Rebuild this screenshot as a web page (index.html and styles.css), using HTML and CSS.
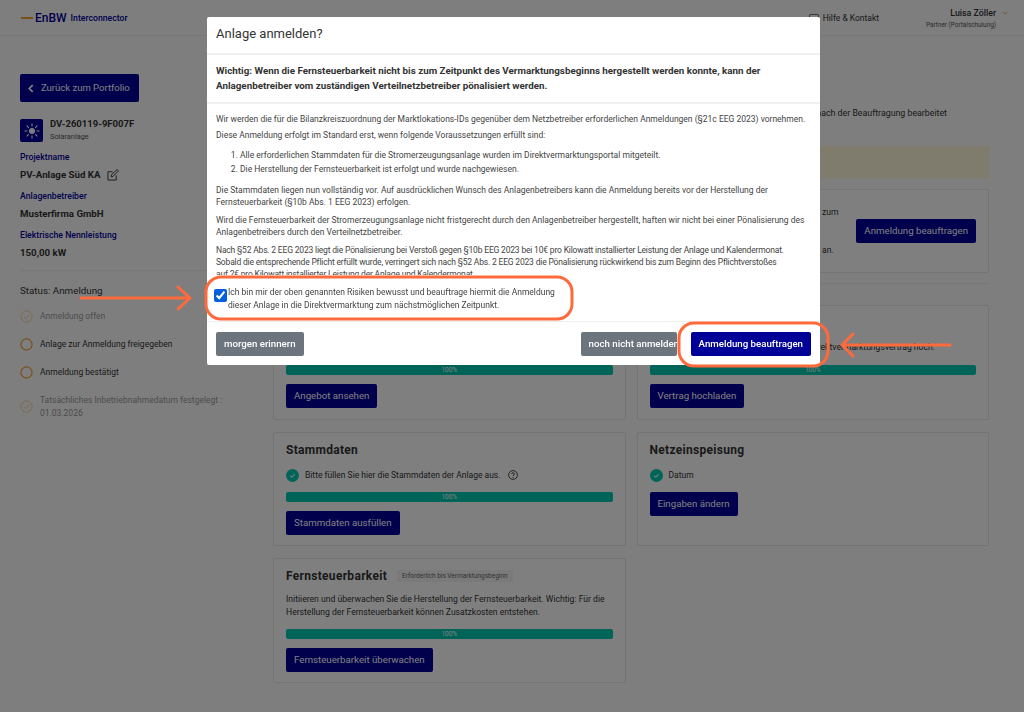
FILE: index.html
```html
<!DOCTYPE html>
<html lang="de">
<head>
    <meta charset="UTF-8">
    <meta name="viewport" content="width=device-width, initial-scale=1.0">
    <title>Anlage anmelden</title>
    <link rel="stylesheet" href="styles.css">
</head>
<body>
    <header class="topbar">
        <div class="logo">
            <span class="logo-line"></span>
            <span class="logo-name">EnBW</span>
            <span class="logo-sub">Interconnector</span>
        </div>
        <div class="topbar-right">
            <a class="help-link">
                <svg class="help-icon" viewBox="0 0 12 10"><rect x="0.5" y="0.5" width="11" height="8" rx="1" fill="none" stroke="#333" stroke-width="1"/></svg>
                Hilfe &amp; Kontakt
            </a>
            <div class="user">
                <div class="user-name">Luisa Zöller</div>
                <div class="user-role">Partner (Portalschulung)</div>
            </div>
            <svg class="user-chevron" viewBox="0 0 8 5"><path d="M1 1l3 3 3-3" fill="none" stroke="#f0a030" stroke-width="1.2"/></svg>
        </div>
    </header>

    <div class="layout">
        <aside class="sidebar">
            <a class="btn btn-back">
                <svg class="back-icon" viewBox="0 0 7 10"><path d="M5.5 1L1.5 5l4 4" fill="none" stroke="#fff" stroke-width="2"/></svg>
                Zurück zum Portfolio
            </a>

            <div class="asset">
                <div class="asset-icon">
                    <svg viewBox="0 0 16 16" width="16" height="16">
                        <circle cx="8" cy="8" r="3" fill="#fff"/>
                        <path d="M8 0.5v3M8 12.5v3M0.5 8h3M12.5 8h3M2.7 2.7l2.1 2.1M11.2 11.2l2.1 2.1M2.7 13.3l2.1-2.1M11.2 4.8l2.1-2.1" stroke="#fff" stroke-width="1.1"/>
                    </svg>
                </div>
                <div class="asset-text">
                    <div class="asset-id">DV-260119-9F007F</div>
                    <div class="asset-type">Solaranlage</div>
                </div>
            </div>

            <div class="field-label">Projektname</div>
            <div class="field-value">
                PV-Anlage Süd KA
                <svg class="edit-icon" viewBox="0 0 13 13"><path d="M10 7v5H1V3h5" fill="none" stroke="#333" stroke-width="1"/><path d="M4.5 8.5l.5-2.5 6-5.5 1.5 1.5-6 6z" fill="none" stroke="#333" stroke-width="1"/></svg>
            </div>
            <div class="field-label">Anlagenbetreiber</div>
            <div class="field-value">Musterfirma GmbH</div>
            <div class="field-label">Elektrische Nennleistung</div>
            <div class="field-value">150,00 kW</div>

            <hr class="side-rule">

            <div class="status-title">Status: Anmeldung</div>
            <ul class="steps">
                <li class="step done">
                    <svg class="step-icon" viewBox="0 0 14 14"><circle cx="7" cy="7" r="6" fill="none" stroke="#f0a030" stroke-width="1"/><path d="M4 7l2.2 2.2L10 5" fill="none" stroke="#f0a030" stroke-width="1"/></svg>
                    <span>Anmeldung offen</span>
                </li>
                <li class="step">
                    <svg class="step-icon" viewBox="0 0 14 14"><circle cx="7" cy="7" r="6" fill="none" stroke="#f0a030" stroke-width="1.3"/></svg>
                    <span>Anlage zur Anmeldung freigegeben</span>
                </li>
                <li class="step">
                    <svg class="step-icon" viewBox="0 0 14 14"><circle cx="7" cy="7" r="6" fill="none" stroke="#f0a030" stroke-width="1.3"/></svg>
                    <span>Anmeldung bestätigt</span>
                </li>
                <li class="step done">
                    <svg class="step-icon" viewBox="0 0 14 14"><circle cx="7" cy="7" r="6" fill="none" stroke="#f0a030" stroke-width="1"/><path d="M4 7l2.2 2.2L10 5" fill="none" stroke="#f0a030" stroke-width="1"/></svg>
                    <span>Tatsächliches Inbetriebnahmedatum festgelegt :<br>01.03.2026</span>
                </li>
            </ul>
        </aside>

        <main class="main">
            <p class="intro">nach der Beauftragung bearbeitet</p>
            <div class="alert"></div>

            <section class="card card-top">
                <p class="top-text">zum<br><br><br>an.</p>
                <a class="btn">Anmeldung beauftragen</a>
            </section>

            <hr class="main-rule">

            <div class="card-grid">
                <section class="card card-first">
                    <h2>Angebot</h2>
                    <p class="card-text card-text-single">Sehen Sie sich hier Ihr Angebot an.</p>
                    <div class="progress">100%</div>
                    <a class="btn">Angebot ansehen</a>
                </section>
                <section class="card card-first">
                    <h2>Vertrag</h2>
                    <p class="card-text card-text-single card-text-right">Direktvermarktungsvertrag hoch.</p>
                    <div class="progress">100%</div>
                    <a class="btn">Vertrag hochladen</a>
                </section>
                <section class="card">
                    <h2>Stammdaten</h2>
                    <div class="check-row">
                        <svg class="check-icon" viewBox="0 0 14 14"><circle cx="7" cy="7" r="7" fill="#00c8b0"/><path d="M4.5 7.2l1.8 1.8 3.2-3.6" fill="none" stroke="#fff" stroke-width="1.1"/></svg>
                        <span>Bitte füllen Sie hier die Stammdaten der Anlage aus.</span>
                        <svg class="hint-icon" viewBox="0 0 10 10"><circle cx="5" cy="5" r="4.4" fill="none" stroke="#222" stroke-width="0.8"/><path d="M3.7 4c0-1.7 2.7-1.7 2.7 0 0 1-1.4 1-1.4 2" fill="none" stroke="#222" stroke-width="0.8"/><circle cx="5" cy="7.4" r="0.5" fill="#222"/></svg>
                    </div>
                    <div class="progress">100%</div>
                    <a class="btn">Stammdaten ausfüllen</a>
                </section>
                <section class="card">
                    <h2>Netzeinspeisung</h2>
                    <div class="check-row">
                        <svg class="check-icon" viewBox="0 0 14 14"><circle cx="7" cy="7" r="7" fill="#00c8b0"/><path d="M4.5 7.2l1.8 1.8 3.2-3.6" fill="none" stroke="#fff" stroke-width="1.1"/></svg>
                        <span>Datum</span>
                    </div>
                    <a class="btn">Eingaben ändern</a>
                </section>
                <section class="card">
                    <div class="card-head">
                        <h2>Fernsteuerbarkeit</h2>
                        <span class="badge">Erforderlich bis Vermarktungsbeginn</span>
                    </div>
                    <p class="card-text">Initiieren und überwachen Sie die Herstellung der Fernsteuerbarkeit. Wichtig: Für die Herstellung der Fernsteuerbarkeit können Zusatzkosten entstehen.</p>
                    <div class="progress">100%</div>
                    <a class="btn">Fernsteuerbarkeit überwachen</a>
                </section>
            </div>
        </main>
    </div>

    <div class="backdrop">
        <div class="modal">
            <div class="modal-title">Anlage anmelden?</div>
            <div class="modal-warning">Wichtig: Wenn die Fernsteuerbarkeit nicht bis zum Zeitpunkt des Vermarktungsbeginns hergestellt werden konnte, kann der Anlagenbetreiber vom zuständigen Verteilnetzbetreiber pönalisiert werden.</div>
            <div class="modal-body">
                <p class="lead">Wir werden die für die Bilanzkreiszuordnung der Marktlokations-IDs gegenüber dem Netzbetreiber erforderlichen Anmeldungen (§21c EEG 2023) vornehmen.</p>
                <p>Diese Anmeldung erfolgt im Standard erst, wenn folgende Voraussetzungen erfüllt sind:</p>
                <ol>
                    <li>Alle erforderlichen Stammdaten für die Stromerzeugungsanlage wurden im Direktvermarktungsportal mitgeteilt.</li>
                    <li>Die Herstellung der Fernsteuerbarkeit ist erfolgt und wurde nachgewiesen.</li>
                </ol>
                <p>Die Stammdaten liegen nun vollständig vor. Auf ausdrücklichen Wunsch des Anlagenbetreibers kann die Anmeldung bereits vor der Herstellung der Fernsteuerbarkeit (§10b Abs. 1 EEG 2023) erfolgen.</p>
                <p>Wird die Fernsteuerbarkeit der Stromerzeugungsanlage nicht fristgerecht durch den Anlagenbetreiber hergestellt, haften wir nicht bei einer Pönalisierung des Anlagenbetreibers durch den Verteilnetzbetreiber.</p>
                <p class="penalty">Nach §52 Abs. 2 EEG 2023 liegt die Pönalisierung bei Verstoß gegen §10b EEG 2023 bei 10€ pro Kilowatt installierter Leistung der Anlage und Kalendermonat.<br>Sobald die entsprechende Pflicht erfüllt wurde, verringert sich nach §52 Abs. 2 EEG 2023 die Pönalisierung rückwirkend bis zum Beginn des Pflichtverstoßes<br>auf 2€ pro Kilowatt installierter Leistung der Anlage und Kalendermonat.</p>
            </div>
            <label class="modal-confirm">
                <input type="checkbox" checked>
                <span>Ich bin mir der oben genannten Risiken bewusst und beauftrage hiermit die Anmeldung<br>dieser Anlage in die Direktvermarktung zum nächstmöglichen Zeitpunkt.</span>
            </label>
            <div class="modal-footer">
                <a class="btn btn-grey">morgen erinnern</a>
                <span class="footer-space"></span>
                <a class="btn btn-grey btn-narrow">noch nicht anmelden</a>
                <a class="btn btn-bright">Anmeldung beauftragen</a>
            </div>
        </div>
    </div>

    <!-- Markierungen, die im Screenshot ueber allem liegen -->
    <svg class="marks" viewBox="0 0 1024 712">
        <g fill="none" stroke="#ff6a3d" stroke-width="3" stroke-linecap="round" stroke-linejoin="round">
            <rect x="206" y="277" width="366" height="42" rx="15"/>
            <rect x="679" y="323" width="149" height="43" rx="15"/>
            <path d="M81 298H189M178 287l12 11-12 11"/>
            <path d="M950 345H843M853 334l-11 11 11 11"/>
        </g>
    </svg>
</body>
</html>
```

FILE: styles.css
```css
* {
    box-sizing: border-box;
}
body {
    font-family: Roboto, "Liberation Sans", sans-serif;
    margin: 0;
    height: 712px;
    overflow: hidden;
    background: #fdfdfd;
    color: #333;
    font-size: 9px;
}
p {
    margin: 0;
}
.topbar {
    height: 36px;
    border-bottom: 1px solid #eee;
    display: flex;
    justify-content: space-between;
    align-items: center;
    padding: 0 16px 0 21px;
}
.logo {
    display: flex;
    align-items: center;
}
.logo-line {
    width: 12px;
    height: 2px;
    background: #f0a030;
    margin-right: 2px;
}
.logo-name {
    color: #000099;
    font-size: 12px;
    font-weight: 500;
    margin-right: 4px;
}
.logo-sub {
    color: #000099;
    font-size: 8.7px;
    font-weight: 500;
}
.topbar-right {
    display: flex;
    align-items: center;
}
.help-link {
    display: flex;
    align-items: center;
    gap: 4px;
    font-size: 8.5px;
    margin-right: 47px;
}
.help-icon {
    width: 10px;
    height: 8px;
}
.user {
    text-align: right;
    padding-top: 2px;
}
.user-name {
    font-size: 8.8px;
    font-weight: 500;
}
.user-role {
    font-size: 6.4px;
    color: #555;
    margin-top: 3px;
}
.user-chevron {
    width: 6px;
    height: 4px;
    margin-left: 6px;
    margin-bottom: 9px;
}
.layout {
    display: flex;
}
.sidebar {
    width: 273px;
    flex: none;
    padding: 38px 24px 0 20px;
}
.btn {
    display: inline-block;
    background: #000099;
    color: #fff;
    font-size: 9.7px;
    line-height: 24px;
    height: 24px;
    padding: 0 8px;
    border-radius: 2px;
    white-space: nowrap;
}
.btn-back {
    display: inline-flex;
    align-items: center;
    gap: 7px;
    height: 28px;
    padding: 0 9px 0 8px;
    line-height: 28px;
    font-size: 9.5px;
}
.back-icon {
    width: 6px;
    height: 9px;
}
.asset {
    display: flex;
    align-items: center;
    gap: 7px;
    margin-top: 17px;
    margin-bottom: 10px;
}
.asset-icon {
    width: 23px;
    height: 23px;
    background: #000099;
    border-radius: 2px;
    display: flex;
    align-items: center;
    justify-content: center;
}
.asset-text {
    margin-top: -3px;
}
.asset-id {
    font-size: 9.5px;
    font-weight: 700;
}
.asset-type {
    font-size: 7.4px;
    color: #555;
    margin-top: 3px;
}
.field-label {
    color: #000099;
    font-size: 8.7px;
    font-weight: 500;
    line-height: 11px;
}
.field-value {
    display: flex;
    align-items: center;
    gap: 7px;
    font-size: 9.7px;
    font-weight: 700;
    line-height: 13px;
    margin-top: 5px;
    margin-bottom: 10px;
}
.edit-icon {
    width: 12px;
    height: 12px;
}
.side-rule {
    border: 0;
    border-top: 1px solid #eee;
    margin: 11px 0 13px;
}
.status-title {
    font-size: 9.8px;
    line-height: 13px;
    margin-bottom: 13px;
}
.steps {
    list-style: none;
    margin: 0;
    padding: 0;
}
.step {
    display: flex;
    align-items: center;
    gap: 7px;
    font-size: 8.5px;
    line-height: 12.5px;
    min-height: 13px;
    margin-bottom: 15px;
}
.step.done {
    opacity: 0.5;
}
.step-icon {
    width: 13px;
    height: 13px;
    flex: none;
}
.main {
    flex: 1;
    min-width: 0;
    padding: 71px 35px 0 0;
}
.intro {
    font-size: 8.8px;
    line-height: 12px;
    text-align: right;
    padding-right: 42px;
}
.alert {
    height: 32px;
    background: #fff8dc;
    margin-top: 27px;
    margin-bottom: 11px;
}
.card {
    background: #fff;
    border: 1px solid #e8e8e8;
    border-radius: 2px;
    padding: 10px 12px 10px;
}
.card-first {
    padding-bottom: 11px;
}
.card-top {
    height: 84px;
    display: flex;
    justify-content: space-between;
    align-items: center;
}
.top-text {
    font-size: 8.6px;
    line-height: 12.67px;
    padding-left: 536px;
}
.card-top .btn {
    margin-top: -1px;
}
.main-rule {
    border: 0;
    border-top: 1px solid #eee;
    margin: 10px 0 21px;
}
.card-grid {
    display: grid;
    grid-template-columns: 1fr 1fr;
    column-gap: 11px;
    row-gap: 12px;
}
h2 {
    font-size: 12px;
    font-weight: 700;
    line-height: 14px;
    margin: 0 0 11px;
    letter-spacing: 0.3px;
}
.card-head {
    display: flex;
    align-items: center;
    gap: 10px;
    margin-bottom: 10px;
}
.card-head h2 {
    margin: 0;
}
.badge {
    font-size: 6.5px;
    background: #f5f5f5;
    color: #666;
    padding: 2px 5px;
    border-radius: 2px;
}
.card-text {
    font-size: 8.6px;
    line-height: 12.5px;
    margin-bottom: 11px;
}
.card-text-single {
    line-height: 12px;
    margin-bottom: 12px;
}
.card-text-right {
    text-align: right;
    padding-right: 41px;
}
.check-row {
    display: flex;
    align-items: center;
    gap: 6px;
    font-size: 8.5px;
    height: 14px;
    margin-bottom: 10px;
}
.check-icon {
    width: 13px;
    height: 13px;
}
.hint-icon {
    width: 10px;
    height: 10px;
    margin-left: 1px;
}
.progress {
    height: 10px;
    background: #00c8b0;
    border-radius: 2px;
    color: #fff;
    font-size: 6.5px;
    line-height: 10px;
    text-align: center;
    margin-bottom: 9px;
}
.backdrop {
    position: fixed;
    inset: 0;
    background: rgba(0, 0, 0, 0.5);
    display: flex;
    justify-content: flex-start;
    align-items: flex-start;
    padding: 17px 0 0 207px;
}
.modal {
    width: 613px;
    height: 348px;
    background: #fff;
    border-radius: 2px;
    display: flex;
    flex-direction: column;
}
.modal-title {
    height: 38px;
    line-height: 33px;
    padding: 0 9px;
    font-size: 13px;
    border-bottom: 2px solid #f0f0f0;
    flex: none;
}
.modal-warning {
    height: 49px;
    padding: 9px 9px 0;
    font-size: 9.8px;
    font-weight: 700;
    line-height: 14.5px;
    border-bottom: 2px solid #f0f0f0;
    flex: none;
}
.modal-body {
    height: 171px;
    flex: none;
    overflow: hidden;
    padding: 9px 9px 0;
    font-size: 8.5px;
    line-height: 12px;
    color: #444;
}
.modal-body p {
    margin-bottom: 6px;
}
.modal-body p.lead {
    margin-bottom: 4px;
}
.modal-body p.penalty {
    letter-spacing: -0.18px;
}
.modal-body ol {
    margin: 7px 0 8px;
    padding-left: 24px;
    line-height: 14px;
}
.modal-confirm {
    flex: none;
    height: 47px;
    display: flex;
    align-items: flex-start;
    padding: 11px 7px 0;
    font-size: 8.5px;
    line-height: 13px;
    border-bottom: 1px solid #eee;
    color: #444;
}
.modal-confirm input {
    width: 13px;
    height: 13px;
    margin: 3px 0 0 0;
    accent-color: #0060dd;
    flex: none;
}
.modal-confirm span {
    margin-left: 1px;
}
.modal-footer {
    flex: 1;
    display: flex;
    align-items: center;
    padding: 0 9px;
    gap: 14px;
}
.footer-space {
    flex: 1;
}
.btn-grey {
    background: #6c757d;
    font-weight: 500;
}
.btn-narrow {
    width: 96px;
}
.btn-bright {
    font-weight: 500;
}
.marks {
    position: fixed;
    inset: 0;
    width: 1024px;
    height: 712px;
    pointer-events: none;
}
```
